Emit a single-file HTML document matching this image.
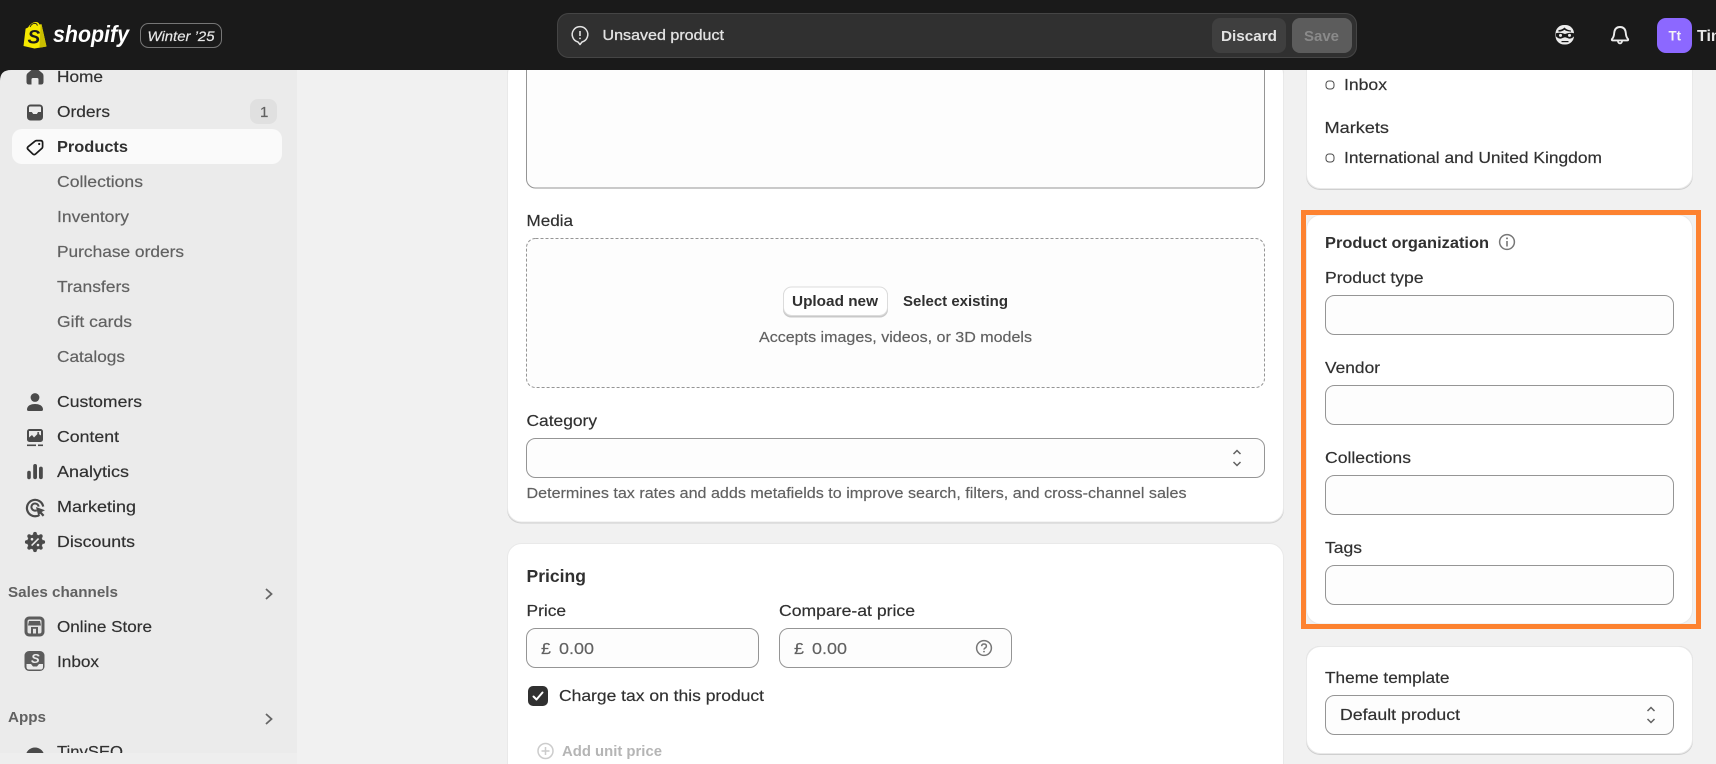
<!DOCTYPE html>
<html lang="en">
<head>
<meta charset="utf-8">
<title>Shopify product</title>
<style>
html,body{margin:0;padding:0;width:1716px;height:764px;overflow:hidden;background:#f1f1f1}
svg{display:block;filter:blur(.3px)}
text{font-family:"Liberation Sans",sans-serif;font-size:16px;fill:#303030;stroke:#303030;stroke-width:.18}
.b{font-weight:700;stroke-width:0}
.g{fill:#616161;stroke:#616161}
.ic{fill:#4a4a4a}
.in{fill:#fdfdfd;stroke:#959595;stroke-width:1}
.card{fill:#fff;stroke:#e9e9e9;stroke-width:1}
.sh{fill:#cfcfcf}
</style>
</head>
<body>
<svg width="1716" height="764" viewBox="0 0 1716 764" xmlns="http://www.w3.org/2000/svg">
<rect width="1716" height="764" fill="#f1f1f1"/>

<!-- Sidebar -->
<rect x="0" y="60" width="297" height="704" fill="#ebebeb"/>
<rect x="12" y="129" width="270" height="35" rx="10" fill="#fafafa"/>
<rect x="250" y="99" width="27" height="25" rx="8" fill="#e0e0e0"/>

<text x="57" y="82" textLength="46" lengthAdjust="spacingAndGlyphs">Home</text>
<text x="57" y="117" textLength="53" lengthAdjust="spacingAndGlyphs">Orders</text>
<text x="260" y="117" class="g" style="font-size:15px">1</text>
<text x="57" y="152" class="b" textLength="71" lengthAdjust="spacingAndGlyphs">Products</text>
<text x="57" y="187" class="g" textLength="86" lengthAdjust="spacingAndGlyphs">Collections</text>
<text x="57" y="222" class="g" textLength="72" lengthAdjust="spacingAndGlyphs">Inventory</text>
<text x="57" y="257" class="g" textLength="127" lengthAdjust="spacingAndGlyphs">Purchase orders</text>
<text x="57" y="292" class="g" textLength="73" lengthAdjust="spacingAndGlyphs">Transfers</text>
<text x="57" y="327" class="g" textLength="75" lengthAdjust="spacingAndGlyphs">Gift cards</text>
<text x="57" y="362" class="g" textLength="68" lengthAdjust="spacingAndGlyphs">Catalogs</text>
<text x="57" y="407" textLength="85" lengthAdjust="spacingAndGlyphs">Customers</text>
<text x="57" y="442" textLength="62" lengthAdjust="spacingAndGlyphs">Content</text>
<text x="57" y="477" textLength="72" lengthAdjust="spacingAndGlyphs">Analytics</text>
<text x="57" y="512" textLength="79" lengthAdjust="spacingAndGlyphs">Marketing</text>
<text x="57" y="547" textLength="78" lengthAdjust="spacingAndGlyphs">Discounts</text>
<text x="8" y="597" class="b" style="font-size:14.5px;fill:#616161" textLength="110" lengthAdjust="spacingAndGlyphs">Sales channels</text>
<text x="57" y="632" textLength="95" lengthAdjust="spacingAndGlyphs">Online Store</text>
<text x="57" y="667" textLength="42" lengthAdjust="spacingAndGlyphs">Inbox</text>
<text x="8" y="722" class="b" style="font-size:14.5px;fill:#616161" textLength="38" lengthAdjust="spacingAndGlyphs">Apps</text>
<text x="57" y="757" textLength="66" lengthAdjust="spacingAndGlyphs">TinySEO</text>

<!-- Sidebar icons -->
<path class="ic" d="M35 67 L42.6 73.4 Q43.5 74.3 43.5 76 V82 Q43.5 84.5 41 84.5 H38.5 V79.5 Q38.5 78 37 78 H33 Q31.5 78 31.5 79.5 V84.5 H29 Q26.5 84.5 26.5 82 V76 Q26.5 74.3 27.4 73.4 Z"/>
<rect class="ic" x="27" y="104.5" width="16" height="16" rx="3.5"/>
<path fill="#ebebeb" d="M30 106.5 H40 Q41 106.5 41 107.5 V112 H38.2 L36.8 114 H33.2 L31.8 112 H29 V107.5 Q29 106.5 30 106.5 Z"/>
<path fill="none" stroke="#1a1a1a" stroke-width="1.7" stroke-linejoin="round" d="M36.4 140.6 H40.6 Q42.6 140.6 42.6 142.6 V146.8 Q42.6 147.7 42 148.3 L35.6 154 Q34.2 155.2 32.8 154 L28 149.4 Q26.8 148 28 146.8 L35 141.2 Q35.6 140.6 36.4 140.6 Z"/>
<circle cx="39.2" cy="144" r="1.1" fill="#1a1a1a"/>
<circle class="ic" cx="35" cy="397.5" r="4.4"/>
<path class="ic" d="M27 409.4 C27 405.6 31 404 35 404 S43 405.6 43 409.4 Q43 411 41.4 411 H28.6 Q27 411 27 409.4 Z"/>
<rect class="ic" x="27" y="429" width="16" height="13" rx="2.5"/>
<path fill="#ebebeb" d="M29 431 H41 V435.5 L38 433.5 L34 437.5 L32 435 L29 437.5 Z"/>
<circle class="ic" cx="38.2" cy="433" r="1"/>
<rect class="ic" x="27" y="444.5" width="9" height="1.6"/>
<rect class="ic" x="38" y="444.5" width="5" height="1.6"/>
<rect class="ic" x="27.2" y="470.8" width="3.6" height="8.4" rx="1.8"/>
<rect class="ic" x="33.2" y="464" width="3.8" height="15.2" rx="1.9"/>
<rect class="ic" x="39" y="466.6" width="3.8" height="12.6" rx="1.9"/>
<path fill="none" stroke="#4a4a4a" stroke-width="2.2" d="M39.5 515 A8.2 8.2 0 1 1 43.2 506.6"/>
<path fill="none" stroke="#4a4a4a" stroke-width="2" d="M36.8 510.2 A3.6 3.6 0 1 1 38.6 506.6"/>
<path class="ic" d="M36 507 L45 510.2 L41.6 512 L44.4 515 L42.8 516.6 L40 513.6 L38.6 517 Z"/>
<g class="ic">
<circle cx="35" cy="542" r="7.8"/>
<circle cx="35" cy="533.8" r="1.9"/><circle cx="35" cy="550.2" r="1.9"/>
<circle cx="26.8" cy="542" r="1.9"/><circle cx="43.2" cy="542" r="1.9"/>
<circle cx="29.2" cy="536.2" r="1.9"/><circle cx="40.8" cy="536.2" r="1.9"/>
<circle cx="29.2" cy="547.8" r="1.9"/><circle cx="40.8" cy="547.8" r="1.9"/>
</g>
<path d="M38.6 538.6 L31.6 545.6" stroke="#ebebeb" stroke-width="1.6"/>
<circle cx="32" cy="539.2" r="1.3" fill="#ebebeb"/><circle cx="38" cy="545" r="1.3" fill="#ebebeb"/>
<path fill="none" stroke="#666" stroke-width="1.8" d="M266 589 L271.5 594 L266 599"/>
<path fill="none" stroke="#666" stroke-width="1.8" d="M266 714 L271.5 719 L266 724"/>
<!-- Online Store icon -->
<rect x="24.5" y="616.5" width="20" height="20" rx="4.5" fill="#5c5c5c"/>
<rect x="27.5" y="619.5" width="14" height="14" rx="2" fill="#e4e4e4"/>
<path fill="#5c5c5c" d="M29 621 H40 L41 625.5 H28 Z"/>
<rect x="31" y="627.5" width="2" height="6" fill="#5c5c5c"/>
<rect x="36" y="627.5" width="2" height="6" fill="#5c5c5c"/>
<rect x="31" y="627" width="7" height="1.8" fill="#5c5c5c"/>
<!-- Inbox icon -->
<rect x="24.5" y="651" width="20" height="20" rx="4.5" fill="#5c5c5c"/>
<path fill="#ebebeb" d="M26.5 664 H31 L33 666.5 H37 L39 664 H43 V667 Q43 669.5 41 669.5 H29 Q26.5 669.5 26.5 667 Z"/>
<text x="31" y="663" class="b" style="font-size:13px;fill:#ebebeb;font-style:italic">S</text>
<circle cx="35" cy="757" r="9.5" fill="#4a4a4a"/>
<rect x="0" y="753" width="297" height="11" fill="#eeeeee"/>

<!-- Main card 1 -->
<rect class="sh" x="507" y="60" width="777" height="463.5" rx="14"/>
<rect class="card" x="507.5" y="60" width="776" height="462" rx="14"/>
<rect class="in" x="526.5" y="40" width="738" height="148" rx="9"/>
<text x="526.5" y="226" textLength="46.5" lengthAdjust="spacingAndGlyphs">Media</text>
<rect x="526.5" y="238.5" width="738" height="149" rx="9" fill="#fdfdfd" stroke="#959595" stroke-width="1" stroke-dasharray="3 2"/>
<rect x="783" y="287.5" width="105" height="30" rx="8" fill="#c9c9c9"/>
<rect x="783.5" y="287" width="104" height="28.5" rx="8" fill="#fff" stroke="#dcdcdc"/>
<text x="792" y="306" class="b" style="font-size:15px" textLength="86" lengthAdjust="spacingAndGlyphs">Upload new</text>
<text x="903" y="306" class="b" style="font-size:15px" textLength="105" lengthAdjust="spacingAndGlyphs">Select existing</text>
<text x="759" y="342" class="g" style="font-size:15px" textLength="273" lengthAdjust="spacingAndGlyphs">Accepts images, videos, or 3D models</text>
<text x="526.5" y="426" textLength="70.5" lengthAdjust="spacingAndGlyphs">Category</text>
<rect class="in" x="526.5" y="438.5" width="738" height="39" rx="9"/>
<path fill="none" stroke="#616161" stroke-width="1.5" d="M1233.5 454 L1237 450.5 L1240.5 454 M1233.5 462 L1237 465.5 L1240.5 462"/>
<text x="526.5" y="498" class="g" style="font-size:15px" textLength="660" lengthAdjust="spacingAndGlyphs">Determines tax rates and adds metafields to improve search, filters, and cross-channel sales</text>

<!-- Pricing card -->
<path class="card" d="M507.5 764 V557.5 A14 14 0 0 1 521.5 543.5 H1269.5 A14 14 0 0 1 1283.5 557.5 V764"/>
<text x="526.5" y="582" class="b" style="font-size:17.5px" textLength="59.5" lengthAdjust="spacingAndGlyphs">Pricing</text>
<text x="526.5" y="616" textLength="39.5" lengthAdjust="spacingAndGlyphs">Price</text>
<text x="779" y="616" textLength="136" lengthAdjust="spacingAndGlyphs">Compare-at price</text>
<rect class="in" x="526.5" y="628.5" width="232" height="39" rx="9"/>
<rect class="in" x="779.5" y="628.5" width="232" height="39" rx="9"/>
<text x="541" y="654" class="g" textLength="10" lengthAdjust="spacingAndGlyphs">£</text>
<text x="559" y="654" class="g" textLength="35" lengthAdjust="spacingAndGlyphs">0.00</text>
<text x="794" y="654" class="g" textLength="10" lengthAdjust="spacingAndGlyphs">£</text>
<text x="812" y="654" class="g" textLength="35" lengthAdjust="spacingAndGlyphs">0.00</text>
<circle cx="984" cy="648" r="7.4" fill="none" stroke="#777" stroke-width="1.5"/>
<path fill="none" stroke="#777" stroke-width="1.5" d="M981.6 646.2 Q981.8 644 984 644 Q986.4 644 986.4 646 Q986.4 647.4 984.8 648.2 Q984 648.7 984 649.6"/>
<circle cx="984" cy="651.6" r=".9" fill="#777"/>
<rect x="528" y="686" width="20" height="20" rx="5" fill="#303030"/>
<path fill="none" stroke="#fff" stroke-width="2" stroke-linecap="round" stroke-linejoin="round" d="M533.5 696.5 L536.5 699.5 L542.5 692.5"/>
<text x="559" y="701" textLength="205" lengthAdjust="spacingAndGlyphs">Charge tax on this product</text>
<circle cx="545.5" cy="751" r="7.5" fill="none" stroke="#cccccc" stroke-width="1.5"/>
<path stroke="#cccccc" stroke-width="1.5" d="M545.5 747 V755 M541.5 751 H549.5"/>
<text x="562" y="756" class="b" style="fill:#b5b5b5;font-size:15px" textLength="100" lengthAdjust="spacingAndGlyphs">Add unit price</text>

<!-- Right column: top card -->
<rect class="sh" x="1306" y="40" width="387" height="150" rx="14"/>
<rect class="card" x="1306.5" y="40" width="386" height="148.5" rx="14"/>
<rect x="1326" y="81" width="8" height="8" rx="3" fill="none" stroke="#4a4a4a" stroke-width="1"/>
<text x="1344" y="90" textLength="43" lengthAdjust="spacingAndGlyphs">Inbox</text>
<text x="1324.5" y="133" textLength="64.5" lengthAdjust="spacingAndGlyphs">Markets</text>
<rect x="1326" y="154" width="8" height="8" rx="3" fill="none" stroke="#4a4a4a" stroke-width="1"/>
<text x="1344" y="163" textLength="258" lengthAdjust="spacingAndGlyphs">International and United Kingdom</text>

<!-- Product organization -->
<rect class="card" x="1306.5" y="215" width="386" height="409" rx="14"/>
<text x="1325" y="248" class="b" textLength="164" lengthAdjust="spacingAndGlyphs">Product organization</text>
<circle cx="1507" cy="242" r="7.4" fill="none" stroke="#777" stroke-width="1.5"/>
<circle cx="1507" cy="238.4" r="1" fill="#777"/>
<path stroke="#777" stroke-width="1.6" d="M1507 241 V246.5"/>
<text x="1325" y="283" textLength="98.5" lengthAdjust="spacingAndGlyphs">Product type</text>
<rect class="in" x="1325.5" y="295.5" width="348" height="39" rx="9"/>
<text x="1325" y="373" textLength="55" lengthAdjust="spacingAndGlyphs">Vendor</text>
<rect class="in" x="1325.5" y="385.5" width="348" height="39" rx="9"/>
<text x="1325" y="463" textLength="86" lengthAdjust="spacingAndGlyphs">Collections</text>
<rect class="in" x="1325.5" y="475.5" width="348" height="39" rx="9"/>
<text x="1325" y="553" textLength="37" lengthAdjust="spacingAndGlyphs">Tags</text>
<rect class="in" x="1325.5" y="565.5" width="348" height="39" rx="9"/>
<rect x="1303.5" y="212.5" width="395" height="414" fill="none" stroke="#fd8230" stroke-width="5"/>

<!-- Theme template -->
<rect class="sh" x="1306" y="646" width="387" height="109" rx="14"/>
<rect class="card" x="1306.5" y="646.5" width="386" height="107" rx="14"/>
<text x="1325" y="683" textLength="124.5" lengthAdjust="spacingAndGlyphs">Theme template</text>
<rect class="in" x="1325.5" y="695.5" width="348" height="39" rx="9"/>
<text x="1340" y="720" textLength="120" lengthAdjust="spacingAndGlyphs">Default product</text>
<path fill="none" stroke="#616161" stroke-width="1.5" d="M1647.5 711 L1651 707.5 L1654.5 711 M1647.5 719 L1651 722.5 L1654.5 719"/>

<!-- Top bar -->
<rect x="0" y="0" width="1716" height="70" fill="#1a1a1a"/>
<path fill="#1a1a1a" d="M0 70 H11 Q0 70 0 81 Z"/>
<!-- Bag logo -->
<path fill="#f6e900" d="M28 27.5 Q31 22.5 35.5 22 Q38.5 21.8 39.5 24.5 L41.5 24.2 L46.5 46.5 L34.5 48.5 L23.5 46 L25.6 28.6 Z"/>
<path fill="#c9bd00" d="M41.5 24.2 L46.5 46.5 L39.5 47.7 L40.6 24.3 Z"/>
<path fill="none" stroke="#1a1a1a" stroke-width=".9" d="M30 27 Q31.5 23.5 34.8 23.3 Q36.8 23.3 37.4 25.6"/>
<text x="27.5" y="43.5" class="b" style="font-size:19px;font-style:italic;fill:#1a1a1a">S</text>
<text x="53" y="42" class="b" style="font-size:23.5px;font-style:italic;fill:#fff" textLength="76" lengthAdjust="spacingAndGlyphs">shopify</text>
<rect x="140.5" y="23.5" width="81" height="24" rx="8" fill="none" stroke="#767676" stroke-width="1"/>
<text x="147.5" y="41" style="font-size:14px;font-style:italic;fill:#e8e8e8;stroke:#e8e8e8" textLength="67" lengthAdjust="spacingAndGlyphs">Winter ’25</text>

<rect x="557.5" y="13.5" width="799" height="44" rx="11" fill="#303030" stroke="#454545"/>
<path fill="none" stroke="#e3e3e3" stroke-width="1.5" stroke-linejoin="round" d="M578 42 A7.8 7.8 0 1 1 582 42 L580 44.5 Z"/>
<path stroke="#e3e3e3" stroke-width="1.6" d="M580 31 V36"/>
<circle cx="580" cy="38.4" r=".9" fill="#e3e3e3"/>
<text x="602.5" y="40" style="font-size:15px;fill:#e3e3e3;stroke:#e3e3e3;stroke-width:.3" textLength="121.5" lengthAdjust="spacingAndGlyphs">Unsaved product</text>
<rect x="1212" y="18" width="74" height="35" rx="8" fill="#3f3f3f"/>
<text x="1221" y="41" class="b" style="font-size:15px;fill:#e3e3e3" textLength="56" lengthAdjust="spacingAndGlyphs">Discard</text>
<rect x="1292" y="18" width="60" height="35" rx="8" fill="#5c5c5c"/>
<text x="1304" y="41" class="b" style="font-size:15px;fill:#8a8a8a" textLength="35" lengthAdjust="spacingAndGlyphs">Save</text>

<!-- Bandit icon -->
<rect x="1555.5" y="25" width="18.5" height="19.5" rx="8.5" fill="#ececec"/>
<path fill="#1a1a1a" d="M1558.5 30 Q1562 30 1564.5 27.5 Q1566.5 30 1571 30.5 L1571 31.6 Q1566 31.4 1564.5 29.8 Q1562 31.8 1558.5 31.6 Z"/>
<path fill="#1a1a1a" d="M1556 33.2 Q1560.5 32 1565 34 Q1569.5 32 1574 33.2 V36.4 Q1571 39.4 1568.4 38.4 Q1566 37.4 1565 37.2 Q1564 37.4 1561.6 38.4 Q1559 39.4 1556 36.4 Z"/>
<circle cx="1560.5" cy="35.4" r="1.5" fill="#ececec"/>
<circle cx="1569.5" cy="35.4" r="1.5" fill="#ececec"/>
<path fill="none" stroke="#1a1a1a" stroke-width="1.2" d="M1561.5 41.6 H1568.5"/>
<!-- Bell -->
<path fill="none" stroke="#ececec" stroke-width="1.9" stroke-linejoin="round" d="M1620 27 Q1614.8 27 1614.2 33 Q1614 37 1612 39 Q1611.4 40.4 1612.7 40.4 H1627.3 Q1628.6 40.4 1628 39 Q1626 37 1625.8 33 Q1625.2 27 1620 27 Z"/>
<path fill="none" stroke="#ececec" stroke-width="1.7" d="M1617.8 41 Q1618.4 43.4 1620 43.4 Q1621.6 43.4 1622.2 41"/>
<!-- Avatar -->
<rect x="1657" y="18" width="35" height="35" rx="9" fill="#8c68ff"/>
<text x="1668.5" y="40.5" class="b" style="font-size:14px;fill:#f5f5f5" textLength="12.5" lengthAdjust="spacingAndGlyphs">Tt</text>
<text x="1697" y="41" class="b" style="font-size:16px;fill:#e8e8e8">Tim</text>
</svg>
</body>
</html>
